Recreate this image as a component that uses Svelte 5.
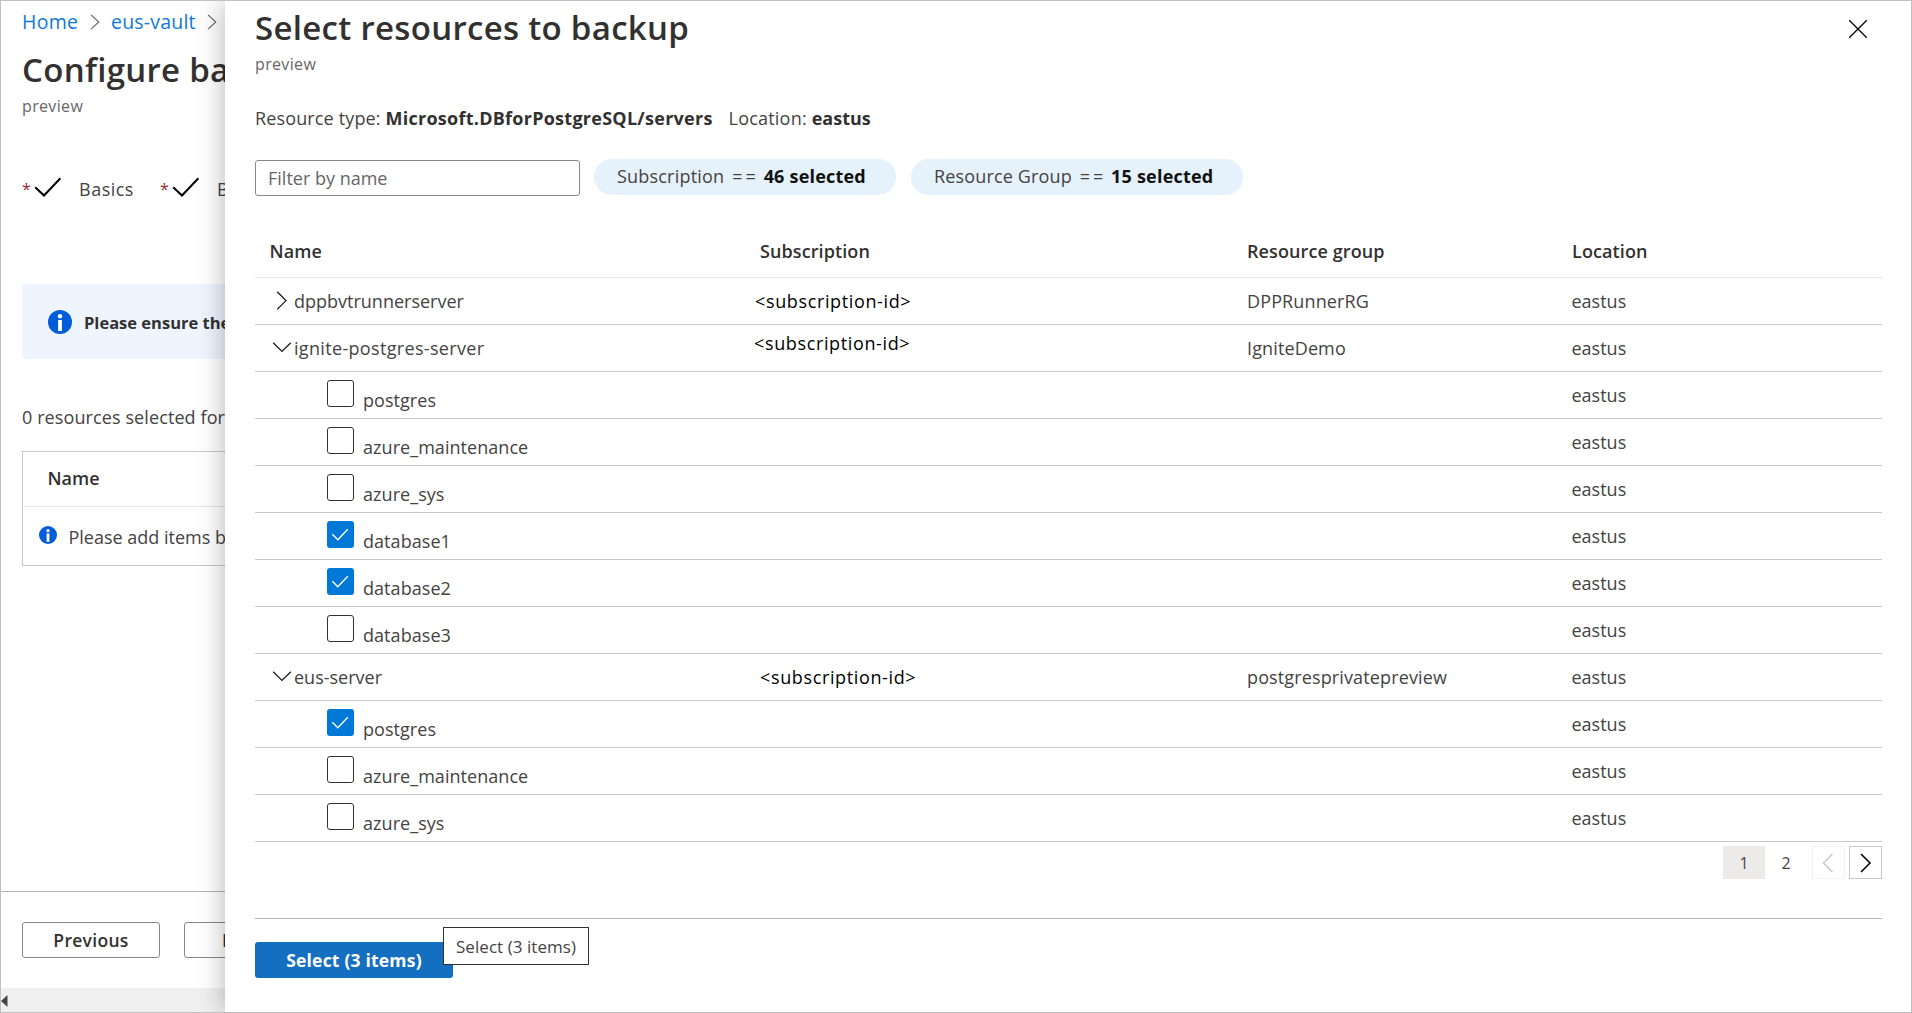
<script>
  const sub = '<subscription-id>';
  const rows = [
    { kind: 'server', open: false, name: 'dppbvtrunnerserver', sub, place: 'near', group: 'DPPRunnerRG' },
    { kind: 'server', open: true, name: 'ignite-postgres-server', sub, place: 'raised', group: 'IgniteDemo' },
    { kind: 'db', name: 'postgres', checked: false },
    { kind: 'db', name: 'azure_maintenance', checked: false },
    { kind: 'db', name: 'azure_sys', checked: false },
    { kind: 'db', name: 'database1', checked: true },
    { kind: 'db', name: 'database2', checked: true },
    { kind: 'db', name: 'database3', checked: false },
    { kind: 'server', open: true, name: 'eus-server', sub, place: '', group: 'postgresprivatepreview' },
    { kind: 'db', name: 'postgres', checked: true },
    { kind: 'db', name: 'azure_maintenance', checked: false },
    { kind: 'db', name: 'azure_sys', checked: false }
  ];
</script>

{#snippet info(size)}
  <svg class="info" width={size} height={size} viewBox="0 0 24 24">
    <circle cx="12" cy="12" r="12" fill="#015cda" />
    <circle cx="12" cy="6.2" r="2.2" fill="#fff" />
    <rect x="10.1" y="10" width="3.8" height="11" fill="#fff" />
  </svg>
{/snippet}

{#snippet step(label)}
  <div class="step">
    <span class="star">*</span>
    <svg class="tick" width="28" height="22" viewBox="0 0 28 22">
      <path d="M1.2 11.2 L10 19.5 L26.4 2.2" fill="none" stroke="#000" stroke-width="2" />
    </svg>
    <span class="step-label">{label}</span>
  </div>
{/snippet}

<div class="window">
  <main class="page">
    <nav class="crumbs">
      <a class="home" href="#home">Home</a>
      <svg width="10" height="16" viewBox="0 0 10 16"><path d="M1 0.8 L8.8 8 L1 15.2" fill="none" stroke="#666" stroke-width="1.1" /></svg>
      <a class="vault" href="#vault">eus-vault</a>
      <svg width="10" height="16" viewBox="0 0 10 16"><path d="M1 0.8 L8.8 8 L1 15.2" fill="none" stroke="#666" stroke-width="1.1" /></svg>
    </nav>
    <h1>Configure backup</h1>
    <p class="preview">preview</p>

    <div class="steps">
      {@render step('Basics')}
      {@render step('Backup policy')}
    </div>

    <div class="banner">
      {@render info(24)}
      <span>Please ensure the</span>
    </div>

    <p class="count">0 resources selected for backup</p>

    <div class="list">
      <div class="list-head">Name</div>
      <div class="list-row">
        {@render info(18)}
        <span>Please add items by</span>
      </div>
    </div>

    <footer class="page-foot">
      <button class="btn">Previous</button>
      <button class="btn next">Next</button>
    </footer>
    <div class="scroll">
      <svg width="7" height="12" viewBox="0 0 7 12"><path d="M6.5 0 L0 6 L6.5 12 Z" fill="#444" /></svg>
    </div>
  </main>

  <section class="panel">
    <header class="panel-head">
      <div>
        <h2>Select resources to backup</h2>
        <p class="preview">preview</p>
      </div>
      <svg class="close" width="20" height="20" viewBox="0 0 20 20">
        <path d="M1.2 1.2 L18.8 18.8 M18.8 1.2 L1.2 18.8" stroke="#000" stroke-width="1.3" />
      </svg>
    </header>

    <p class="meta">
      <span class="rt">Resource type: <b>Microsoft.DBforPostgreSQL/servers</b></span>
      <span class="loc">Location: <b>eastus</b></span>
    </p>

    <div class="filters">
      <input placeholder="Filter by name" />
      <span class="pill one">Subscription <span class="eq">==</span> <b>46 selected</b></span>
      <span class="pill two">Resource Group <span class="eq">==</span> <b>15 selected</b></span>
    </div>

    <div class="table">
      <div class="row head">
        <div class="first">Name</div>
        <div>Subscription</div>
        <div>Resource group</div>
        <div>Location</div>
      </div>
      {#each rows as r}
        <div class="row">
          {#if r.kind === 'server'}
            <div class="server">
              <svg class="chev" width="20" height="20" viewBox="0 0 20 20">
                {#if r.open}
                  <path d="M1.2 4.8 L10 13.4 L18.8 4.8" />
                {:else}
                  <path d="M5.2 0.8 L14 9.6 L5.2 18.4" />
                {/if}
              </svg>
              <span class:hyphened={r.name.split('-').length > 2}>{r.name}</span>
            </div>
          {:else}
            <div class="db">
              <span class="box" class:on={r.checked}>
                {#if r.checked}
                  <svg width="27" height="27" viewBox="0 0 27 27">
                    <path d="M5.3 13.2 L10.8 18.8 L20.8 8.2" fill="none" stroke="#fff" stroke-width="1.4" />
                  </svg>
                {/if}
              </span>
              <span class="db-name">{r.name}</span>
            </div>
          {/if}
          <div class="sub {r.place ?? ''}">{r.sub ?? ''}</div>
          <div class="group">{r.group ?? ''}</div>
          <div class="where">eastus</div>
        </div>
      {/each}
    </div>

    <div class="pager">
      <span class="num current">1</span>
      <span class="num">2</span>
      <span class="arrow off">
        <svg width="33" height="33" viewBox="0 0 33 33"><path d="M20.5 8 L11.5 17 L20.5 26" /></svg>
      </span>
      <span class="arrow">
        <svg width="33" height="33" viewBox="0 0 33 33"><path d="M12 8 L21 17 L12 26" /></svg>
      </span>
    </div>

    <footer class="panel-foot">
      <button class="primary">Select (3 items)</button>
      <span class="tooltip">Select (3 items)</span>
    </footer>
  </section>
</div>

<style>
  :global(body) { background: #fff; }
  .window, .window * { box-sizing: border-box; }
  .window {
    position: relative;
    width: 1912px;
    height: 1013px;
    overflow: hidden;
    border: 1px solid #c0c0c0;
    background: #fff;
    color: #444342;
    font-family: "Open Sans", "Noto Sans", sans-serif;
    font-size: 18px;
    line-height: 24px;
    white-space: nowrap;
  }
  h1, h2, p { margin: 0; }
  svg { display: block; flex: none; }
  h1, h2 { font-weight: 600; color: #323130; }
  b { font-weight: 700; color: #323130; letter-spacing: 0.26px; }
  button { font-family: inherit; margin: 0; padding: 0; }

  .page { width: 240px; height: 1011px; display: flex; flex-direction: column; overflow: hidden; }
  .crumbs { display: flex; align-items: center; height: 24px; margin: 9px 0 0 21px; }
  .crumbs a { flex: none; color: #1078d9; text-decoration: none; font-size: 19.5px; line-height: 22px; }
  .crumbs .home { width: 68px; letter-spacing: 0.3px; }
  .crumbs .vault { width: 96px; margin-left: 11px; letter-spacing: 0.2px; }
  h1 { margin: 14px 0 0 21px; font-size: 33px; line-height: 44px; letter-spacing: 0.3px; }
  .preview { font-size: 16px; line-height: 22px; letter-spacing: 0.35px; color: #666; }
  .page .preview { margin: 3px 0 0 21px; }
  .steps { display: flex; margin: 57px 0 0 21px; height: 32px; }
  .step { display: flex; width: 138px; flex: none; }
  .star { flex: none; width: 12px; color: #a4262c; font-size: 16px; line-height: 30px; }
  .tick { margin-top: 2px; }
  .step-label { margin-left: 17px; line-height: 30px; letter-spacing: 0.5px; }
  .banner {
    display: flex; align-items: center; gap: 12px; flex: none;
    height: 75px; margin: 78px 0 0 21px; padding-left: 26px;
    background: #eef5ff; border-radius: 3px 0 0 3px;
    color: #323130; font-weight: 700; font-size: 16.5px;
  }
  .banner span { margin-top: 2px; }
  .count { margin: 46px 0 0 21px; letter-spacing: 0.1px; }
  .list { flex: none; width: 300px; height: 115px; margin: 22px 0 0 21px; border: 1px solid #c8c8c8; }
  .list-head { height: 55px; margin-left: 1px; padding: 14px 0 0 23.5px; border-bottom: 1px solid #e6e6e6; color: #323130; font-weight: 600; }
  .list-row { display: flex; align-items: center; gap: 11.5px; height: 60px; padding-left: 16px; }
  .list-row .info { margin-top: -4px; }
  .page-foot {
    display: flex; gap: 24px; flex: none; height: 97px; margin-top: auto;
    padding: 30px 0 0 21px; border-top: 1px solid #b4b4b4;
  }
  .btn {
    flex: none; width: 138px; height: 36px; border: 1px solid #8a8886; border-radius: 3px;
    background: #fff; color: #323130; font-size: 17.5px; font-weight: 600; line-height: 34px; letter-spacing: 0.3px;
  }
  .btn.next { padding-left: 37px; text-align: left; }
  .scroll { flex: none; height: 24px; padding-top: 7px; background: #f0f0f0; }

  .panel {
    position: absolute; left: 224px; top: 0; width: 1686px; height: 1011px;
    display: flex; flex-direction: column; padding: 0 28px 0 30px;
    background: #fff; box-shadow: 0 0 26px rgba(0, 0, 0, 0.3);
  }
  .panel-head { display: flex; justify-content: space-between; height: 76px; flex: none; }
  h2 { margin-top: 5px; font-size: 33px; line-height: 44px; letter-spacing: 0.3px; }
  .panel-head .preview { margin-top: 3px; }
  .close { margin: 18px 15px 0 0; }
  .meta { display: flex; margin-top: 29px; letter-spacing: 0.14px; }
  .meta .loc { margin-left: 16px; letter-spacing: 0.2px; }
  .meta .loc b { letter-spacing: 0; }
  .filters { display: flex; margin-top: 29px; height: 37px; align-items: flex-start; }
  .filters input {
    width: 325px; height: 36px; margin: 1px 14px 0 0; padding: 0 12px; border: 1px solid #8a8886; border-radius: 3px;
    font: inherit; color: #323130; background: #fff; outline: none;
  }
  .filters input::placeholder { color: #666; opacity: 1; }
  .pill {
    height: 36px; border-radius: 18px; background: #e5f1fb; line-height: 34px; padding-left: 23px; letter-spacing: 0.2px;
  }
  .pill b { color: #111; letter-spacing: 0.2px; }
  .eq { margin: 0 0 0 3px; letter-spacing: 3px; }
  .pill.one { width: 302px; margin-right: 15px; }
  .pill.two { width: 332px; letter-spacing: 0.15px; }

  .table { flex: none; width: 1627px; margin-top: 30px; }
  .row {
    display: grid; grid-template-columns: 505px 487px 325px 310px;
    height: 47px; line-height: 46px; border-bottom: 1px solid #c8c8c8;
  }
  .row.head { height: 52px; line-height: 51px; border-bottom-color: #e6e6e6; color: #323130; font-weight: 600; letter-spacing: 0.1px; }
  .first { padding-left: 14.5px; }
  .server { display: flex; padding-left: 17px; }
  .chev { margin: 13px 2px 0 0; fill: none; stroke: #1b1b1b; stroke-width: 1.3; }
  .hyphened { letter-spacing: 0.33px; }
  .db { display: flex; padding-left: 72px; }
  .box { width: 27px; height: 27px; margin-top: 8px; border: 1px solid #323130; border-radius: 3px; }
  .box.on { border: 0; background: #0078d7; }
  .db-name { margin: 5px 0 0 9px; letter-spacing: 0.05px; }
  .sub { color: #000; letter-spacing: 0.63px; }
  .group { letter-spacing: 0.13px; }
  .where { margin-left: -0.5px; }
  .near { margin-left: -5px; }
  .raised { margin: -5px 0 0 -6px; }

  .pager { display: flex; justify-content: flex-end; flex: none; margin: 4px 1px 0 0; font-size: 16px; line-height: 34px; }
  .num { width: 42px; height: 33px; text-align: center; }
  .num.current { background: #edebe9; }
  .arrow { width: 33px; height: 33px; margin-left: 4px; border: 1px solid #c8c8c8; }
  .arrow svg { margin: -1px; fill: none; stroke: #000; stroke-width: 1.5; }
  .arrow.off { margin-left: 5px; border-color: #f3f2f1; }
  .arrow.off svg { stroke: #c8c8c8; }

  .panel-foot { position: relative; width: 1627px; margin-top: 39px; padding-top: 23px; border-top: 1px solid #b4b4b4; }
  .primary {
    display: block; width: 198px; height: 36px; border: 0; border-radius: 3px;
    background: #156fc1; color: #fff; font-size: 17.5px; font-weight: 700; line-height: 36px; letter-spacing: 0.2px;
  }
  .tooltip {
    position: absolute; left: 188px; top: 8px; width: 146px; height: 38px;
    border: 1px solid #323130; background: #fff; color: #444;
    text-align: center; font-size: 17px; line-height: 37px; letter-spacing: 0.05px;
  }
</style>
